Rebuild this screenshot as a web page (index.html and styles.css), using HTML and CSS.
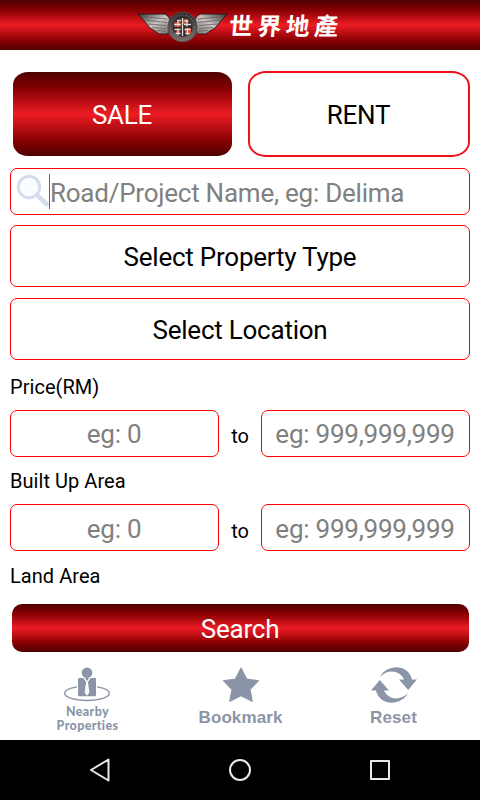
FILE: index.html
```html
<!DOCTYPE html>
<html lang="en">
<head>
  <meta charset="UTF-8">
  <title>世界地產</title>
  <link rel="stylesheet" href="styles.css">
</head>
<body>

<header class="header">
  <svg class="logo" width="91" height="32" viewBox="0 0 91 32">
    <defs>
      <linearGradient id="wing" x1="0" y1="0" x2="1" y2="1">
        <stop offset="0" stop-color="#333"/>
        <stop offset="0.5" stop-color="#c8c4c2"/>
        <stop offset="1" stop-color="#777070"/>
      </linearGradient>
      <linearGradient id="ring" x1="0" y1="0" x2="0" y2="1">
        <stop offset="0" stop-color="#2b2828"/>
        <stop offset="1" stop-color="#7b7474"/>
      </linearGradient>
      <g id="half">
        <path d="M1 3 L28 3 Q32 5 33 9 L31 23 L22 23 L18 20 L13 17 L8 11 Z" fill="url(#wing)" stroke="#241313" stroke-width="0.9"/>
        <path d="M4 5.500 L30 8 M7 9 L30 11.500 M11 13 L29 14.500 M15 16.500 L29 17.500 M20 19.500 L29 20" stroke="#5c5555" stroke-width="0.7"/>
      </g>
    </defs>
    <use href="#half"/>
    <use href="#half" transform="translate(91 0) scale(-1 1)"/>
    <circle cx="45.500" cy="16" r="14.800" fill="url(#ring)" stroke="#555" stroke-width="0.8"/>
    <circle cx="45.500" cy="16" r="12.200" fill="none" stroke="#6d6464" stroke-width="1.200" stroke-dasharray="1.500 1.500"/>
    <circle cx="45.500" cy="16" r="10" fill="#332b2a"/>
    <path d="M37.500 11h6v5h-6zM48 17h6v6h-6zM46 8h4v5h-4zM39 20h4v3h-4z" fill="#d1442f"/>
    <path d="M40 9.500h4M47.500 10h4M37 13.500h7M47 13.500h7M50 8.500v7M41 9v6M37.500 18.500h6M38.500 22.500h5M41 17.500v7M47.500 18.500h6M48.500 22.500h4M50.500 17v7M45.500 7v18" stroke="#e0dbd6" stroke-width="1.300" fill="none"/>
  </svg>
  <span class="brand">世界地產</span>
</header>

<main class="form">
  <div class="tabs">
    <div class="tab sale">SALE</div>
    <div class="tab rent">RENT</div>
  </div>

  <div class="field search-field">
    <svg class="magnifier" width="34" height="34" viewBox="0 0 34 34">
      <path d="M21.500 21.500 L30.500 30" stroke="#d5dceb" stroke-width="5" stroke-linecap="round"/>
      <circle cx="13" cy="13" r="10.700" fill="#fbfcff" stroke="#d5dceb" stroke-width="3"/>
    </svg>
    <span class="caret"></span>
    <span>Road/Project Name, eg: Delima</span>
  </div>

  <div class="select">Select Property Type</div>
  <div class="select">Select Location</div>

  <div class="label">Price(RM)</div>
  <div class="range">
    <div class="field">eg: 0</div>
    <span class="to">to</span>
    <div class="field">eg: 999,999,999</div>
  </div>

  <div class="label">Built Up Area</div>
  <div class="range">
    <div class="field">eg: 0</div>
    <span class="to">to</span>
    <div class="field">eg: 999,999,999</div>
  </div>

  <div class="label">Land Area</div>
</main>

<div class="search-btn">Search</div>

<nav class="tools">
  <div class="tool nearby">
    <svg width="48" height="36" viewBox="0 0 48 36">
      <ellipse cx="24" cy="26.300" rx="22.300" ry="7.200" fill="none" stroke="#8b95a7" stroke-width="1.400"/>
      <path d="M14 10.500h20v19.500h-20z" fill="#fff"/>
      <circle cx="24" cy="5.800" r="5.300" fill="#8b95a7"/>
      <rect x="15" y="11" width="18" height="18.300" rx="1" fill="#8b95a7"/>
      <path d="M20.300 11h7.400L24.900 15l1.500 10.500-2.400 3.300-2.400-3.300 1.500-10.500z" fill="#fff"/>
      <path d="M22.200 11h3.600l-1 2.600h-1.600z" fill="#8b95a7"/>
    </svg>
    <span>Nearby<br>Properties</span>
  </div>
  <div class="tool">
    <svg width="38" height="36" viewBox="0 0 38 36">
      <path d="M19 0.800 L24.700 12.100 L36.700 13.700 L28.200 22.500 L30.300 34.500 L19 28.800 L7.700 34.500 L9.800 22.500 L1.300 13.700 L13.300 12.100 Z" fill="#8b95a7" stroke="#8b95a7" stroke-linejoin="round"/>
    </svg>
    <span>Bookmark</span>
  </div>
  <div class="tool">
    <svg width="48" height="36" viewBox="0 0 48 36">
      <g fill="#8b95a7">
        <path id="arrow" d="M10 10 C16 -2.500 38 -4 42 12.500 L47 12.500 L38.200 23 L29 12.500 L34 12.500 C30 3.500 18 1.500 10 10 Z"/>
        <use href="#arrow" transform="rotate(180 24 18)"/>
      </g>
    </svg>
    <span>Reset</span>
  </div>
</nav>

<footer class="navbar">
  <svg width="24" height="28" viewBox="0 0 24 28"><path d="M20.500 3.500 L3 14 L20.500 24.500 Z"/></svg>
  <svg width="24" height="28" viewBox="0 0 24 28"><circle cx="12" cy="14" r="10"/></svg>
  <svg width="24" height="28" viewBox="0 0 24 28"><rect x="3" y="5" width="18" height="18"/></svg>
</footer>

</body>
</html>
```
FILE: styles.css
```css
* {
  box-sizing: border-box;
}

body {
  margin: 0;
  width: 480px;
  height: 800px;
  display: flex;
  flex-direction: column;
  overflow: hidden;
  background-color: #fff;
  color: #000;
  font-family: Roboto, sans-serif;
  font-size: 26px;
  letter-spacing: -0.24px;
}

.header,
.sale,
.search-btn {
  background: linear-gradient(#500000 0%, #850002 20%, #ed1c24 50%, #850002 82%, #500000 100%);
  color: #fff;
}

.header {
  height: 50px;
  flex: none;
  display: flex;
  align-items: center;
  padding-left: 137px;
}

.logo {
  margin-top: 3px;
}

.brand {
  margin-left: 1px;
  font-family: "Noto Sans CJK TC", sans-serif;
  font-weight: bold;
  font-size: 24px;
  line-height: 40px;
  letter-spacing: 4.5px;
  transform: skewX(-5deg);
}

.form {
  flex: none;
  height: 554px;
  padding: 21px 10px 0;
}

.tabs {
  display: flex;
  justify-content: space-between;
  align-items: center;
  height: 86px;
  padding-left: 3px;
  margin-bottom: 11px;
}

.tab {
  display: flex;
  align-items: center;
  justify-content: center;
  padding: 2px 1px 0 0;
}

.sale {
  width: 219px;
  height: 84px;
  border-radius: 15px / 13px;
}

.rent {
  width: 222px;
  height: 86px;
  border: 2px solid #ee1017;
  border-radius: 18px / 15px;
}

.field {
  height: 47px;
  display: flex;
  align-items: center;
  justify-content: center;
  border: 1px solid #f00;
  border-radius: 7px;
  color: #808080;
}

.search-field {
  justify-content: flex-start;
  padding: 2px 0 0 5px;
}

.magnifier {
  margin-bottom: 3px;
}

.caret {
  width: 1px;
  height: 35px;
  margin-bottom: 2px;
  background-color: #666;
  margin-left: -1px;
}

.select {
  height: 62px;
  margin-top: 10px;
  display: flex;
  align-items: center;
  justify-content: center;
  padding-top: 2px;
  border: 1px solid #f00;
  border-radius: 7px;
}

.select + .select {
  margin-top: 10.5px;
}

.label {
  height: 24px;
  margin: 12.5px 0 11px;
  font-size: 20px;
  line-height: 24px;
  letter-spacing: 0.05px;
}

.select + .label {
  margin-top: 15px;
}

.range {
  display: grid;
  grid-template-columns: 209px 42px 209px;
  align-items: center;
}

.range .field {
  padding: 2px 1px 0 0;
}

.to {
  padding-top: 6px;
  text-align: center;
  font-size: 20px;
}

.search-btn {
  flex: none;
  height: 48px;
  margin: 0 11px 0 12px;
  padding: 2px 1px 0 0;
  display: flex;
  align-items: center;
  justify-content: center;
  border-radius: 10px;
}

.tools {
  flex: none;
  height: 88px;
  display: grid;
  grid-template-columns: 153px 153px 153px;
  padding: 15px 0 0 11px;
  color: #8b95a7;
  font-family: "Liberation Sans", Arial, sans-serif;
  font-weight: bold;
  font-size: 17px;
  letter-spacing: 0.1px;
}

.tool {
  display: flex;
  flex-direction: column;
  align-items: center;
}

.tool span {
  margin-top: 5px;
  line-height: 20px;
}

.nearby svg {
  margin-left: -1px;
}

.nearby span {
  margin-top: 2px;
  font-family: Lato, sans-serif;
  font-weight: 900;
  font-size: 12.5px;
  line-height: 14px;
  letter-spacing: 0.35px;
  text-align: center;
}

.navbar {
  flex: none;
  height: 60px;
  display: flex;
  justify-content: center;
  align-items: center;
  gap: 116px;
  background-color: #000;
}

.navbar svg {
  fill: none;
  stroke: #e8e8e8;
  stroke-width: 2;
  stroke-linejoin: round;
}
```
